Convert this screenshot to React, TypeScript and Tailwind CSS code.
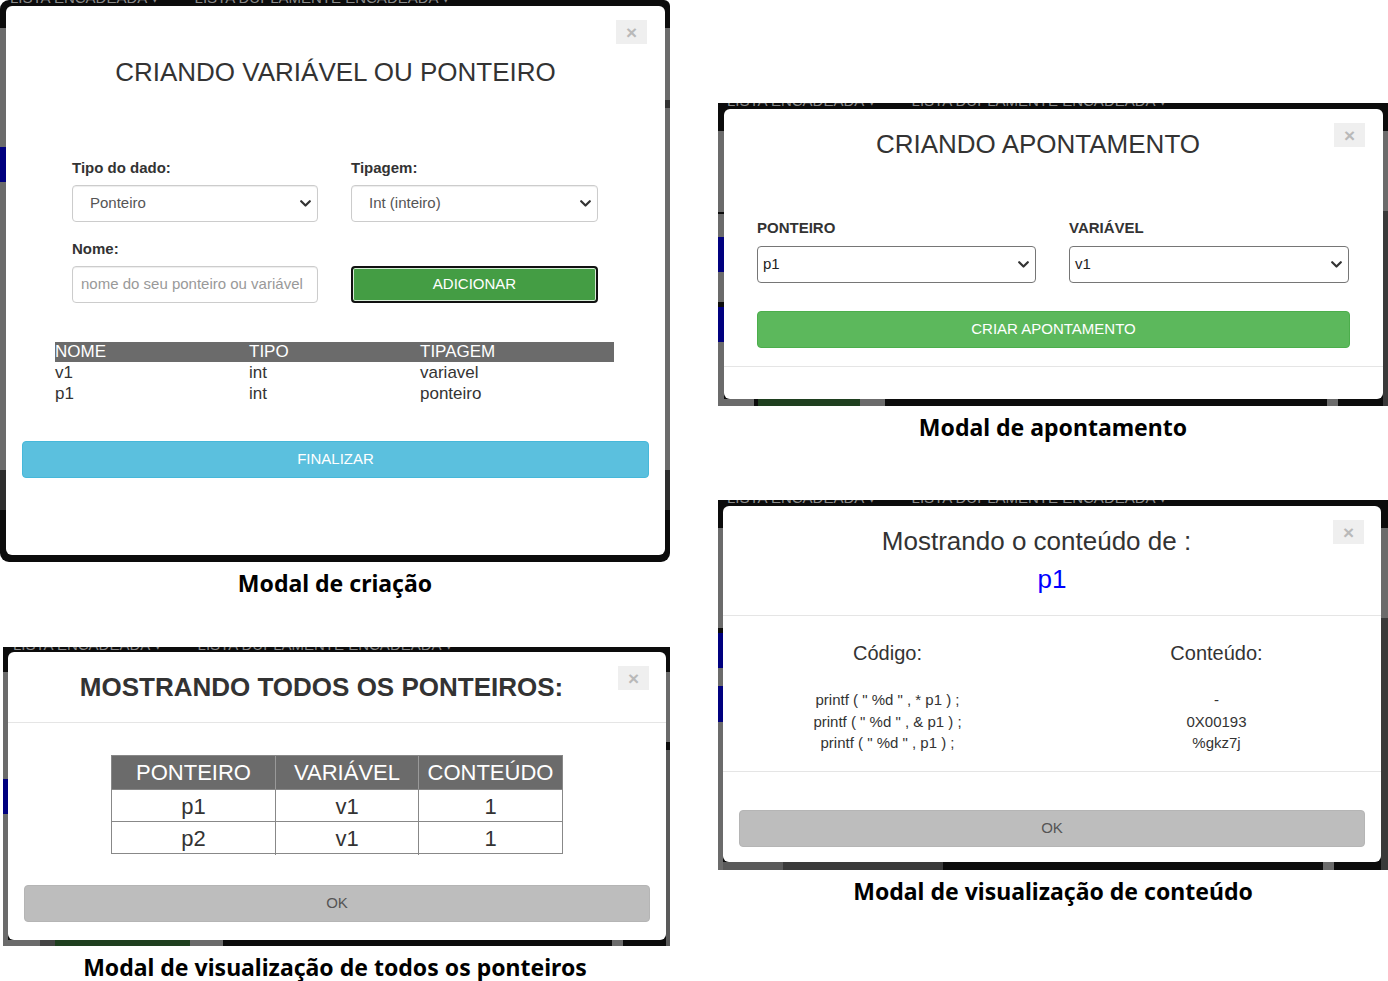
import React from "react";

/* ---------- small bits ---------- */
function Chevron() {
  return (
    <svg width="11" height="7" viewBox="0 0 11 7" className="shrink-0">
      <path d="M1.2 1.2 5.5 5.5 9.8 1.2" fill="none" stroke="#333" strokeWidth="2.2" strokeLinecap="round" strokeLinejoin="round" />
    </svg>
  );
}

function CloseBtn({ className = "" }: { className?: string }) {
  return (
    <div className={`absolute flex h-[24px] w-[31px] items-center justify-center bg-[#efefef] text-[19px] font-bold leading-none text-[#b9b9b9] ${className}`}>
      ×
    </div>
  );
}

function Caption({ children }: { children: React.ReactNode }) {
  return (
    <div className="flex h-[42px] items-center justify-center font-['Noto_Sans',sans-serif] text-[23px] font-bold text-black">
      {children}
    </div>
  );
}

/* ---------- dimmed app behind the modal ---------- */
function Strip({ blocks, className = "" }: { blocks: string[]; className?: string }) {
  return (
    <div className={`flex shrink-0 ${className}`}>
      {blocks.map((b, i) => (
        <div key={i} className={`shrink-0 ${b}`} />
      ))}
      <div className="flex-1" />
    </div>
  );
}

function Backdrop({
  children, left, right, bottom, className = "", navClass = "pl-[4px]", leftW, rightW, topH = "h-[6px]",
}: {
  children: React.ReactNode; left: string[]; right: string[]; bottom: string[]; className?: string;
  navClass?: string; leftW: string; rightW: string; topH?: string;
}) {
  return (
    <div className={`flex overflow-hidden bg-[#0c0c0c] ${className}`}>
      <Strip blocks={left} className={`flex-col ${leftW}`} />
      <div className="flex min-w-0 flex-1 flex-col">
        <div className={`overflow-hidden ${topH}`}>
          <div className={`-mt-[10px] flex gap-[36px] whitespace-nowrap text-[15px] leading-[16px] text-[#8a8a8a] ${navClass}`}>
            <span>LISTA ENCADEADA ▾</span>
            <span>LISTA DUPLAMENTE ENCADEADA ▾</span>
          </div>
        </div>
        <div className="relative">{children}</div>
        <Strip blocks={bottom} className="flex-1 flex-row" />
      </div>
      <Strip blocks={right} className={`flex-col ${rightW}`} />
    </div>
  );
}

/* ---------- Modal 1 : criação ---------- */
function Label({ children, className = "" }: { children: React.ReactNode; className?: string }) {
  return <div className={`text-[15px] font-bold leading-[20px] text-[#333] ${className}`}>{children}</div>;
}

function BsSelect({ value }: { value: string }) {
  return (
    <div className="mt-[7px] flex h-[37px] items-center justify-between rounded-[4px] border border-[#ccc] bg-white pl-[17px] pr-[6px] text-[15px] text-[#555] shadow-[inset_0_1px_1px_rgba(0,0,0,0.075)]">
      <span>{value}</span>
      <Chevron />
    </div>
  );
}

function ModalCriacao() {
  return (
    <div className="relative h-[549px] rounded-[6px] bg-white">
      <CloseBtn className="right-[18px] top-[14px]" />
      <h2 className="pt-[51px] text-center text-[26px] leading-[30px] text-[#333]">CRIANDO VARIÁVEL OU PONTEIRO</h2>
      <div className="mt-[71px] grid grid-cols-[246px_247px] gap-x-[33px] pl-[66px]">
        <div>
          <Label>Tipo do dado:</Label>
          <BsSelect value="Ponteiro" />
          <Label className="mt-[17px]">Nome:</Label>
          <div className="mt-[7px] flex h-[37px] items-center rounded-[4px] border border-[#ccc] pl-[8px] text-[15px] text-[#999] shadow-[inset_0_1px_1px_rgba(0,0,0,0.075)]">
            nome do seu ponteiro ou variável
          </div>
        </div>
        <div>
          <Label>Tipagem:</Label>
          <BsSelect value="Int (inteiro)" />
          <div className="mt-[44px] flex h-[37px] items-center justify-center rounded-[4px] border-2 border-[#111] bg-[#449d44] text-[15px] text-white shadow-[inset_0_0_0_1px_#d7ecd7]">
            ADICIONAR
          </div>
        </div>
      </div>
      <div className="ml-[49px] mt-[39px] w-[559px] text-[17px]">
        <div className="grid h-[20px] grid-cols-[194px_171px_1fr] items-center bg-[#6b6b6b] leading-[20px] text-white">
          <span>NOME</span>
          <span>TIPO</span>
          <span>TIPAGEM</span>
        </div>
        {[
          ["v1", "int", "variavel"],
          ["p1", "int", "ponteiro"],
        ].map((r) => (
          <div key={r[0]} className="grid h-[21px] grid-cols-[194px_171px_1fr] items-center leading-[21px] text-[#333]">
            <span>{r[0]}</span>
            <span>{r[1]}</span>
            <span>{r[2]}</span>
          </div>
        ))}
      </div>
      <div className="mx-[16px] mt-[37px] flex h-[37px] items-center justify-center rounded-[4px] border border-[#46b8da] bg-[#5bc0de] text-[15px] text-white">
        FINALIZAR
      </div>
    </div>
  );
}

/* ---------- Modal 2 : apontamento ---------- */
function NativeSelect({ value }: { value: string }) {
  return (
    <div className="mt-[8px] flex h-[37px] items-center justify-between rounded-[4px] border border-[#767676] bg-white pl-[5px] pr-[6px] text-[15px] text-[#222]">
      <span>{value}</span>
      <Chevron />
    </div>
  );
}

function ModalApontamento() {
  return (
    <div className="relative h-[290px] rounded-[6px] bg-white">
      <CloseBtn className="right-[18px] top-[14px]" />
      <h2 className="pr-[31px] pt-[20px] text-center text-[26px] leading-[30px] text-[#333]">CRIANDO APONTAMENTO</h2>
      <div className="mt-[59px] grid grid-cols-[279px_280px] gap-x-[33px] pl-[33px]">
        <div>
          <Label>PONTEIRO</Label>
          <NativeSelect value="p1" />
        </div>
        <div>
          <Label>VARIÁVEL</Label>
          <NativeSelect value="v1" />
        </div>
      </div>
      <div className="mx-[33px] mt-[28px] flex h-[37px] items-center justify-center rounded-[4px] border border-[#4cae4c] bg-[#5cb85c] text-[15px] text-white">
        CRIAR APONTAMENTO
      </div>
      <div className="mt-[18px] border-t border-[#e5e5e5]" />
    </div>
  );
}

/* ---------- Modal 3 : todos os ponteiros ---------- */
function ModalTodos() {
  const rows = [
    ["p1", "v1", "1"],
    ["p2", "v1", "1"],
  ];
  return (
    <div className="relative h-[288px] rounded-[6px] bg-white">
      <CloseBtn className="right-[17px] top-[14px]" />
      <div className="flex h-[71px] items-center justify-center border-b border-[#e5e5e5] pr-[31px]">
        <h2 className="text-[26px] font-bold leading-[30px] text-[#333]">MOSTRANDO TODOS OS PONTEIROS:</h2>
      </div>
      <div className="ml-[103px] mt-[32px] w-[452px] border border-[#888] text-[22px]">
        <div className="grid h-[33px] grid-cols-[164px_143px_1fr] bg-[#6b6b6b] text-white">
          <span className="flex items-center justify-center border-r border-[#999]">PONTEIRO</span>
          <span className="flex items-center justify-center border-r border-[#999]">VARIÁVEL</span>
          <span className="flex items-center justify-center">CONTEÚDO</span>
        </div>
        {rows.map((r, i) => (
          <div key={i} className="grid h-[32px] grid-cols-[164px_143px_1fr] border-t border-[#888] text-[#333]">
            <span className="flex items-center justify-center border-r border-[#888]">{r[0]}</span>
            <span className="flex items-center justify-center border-r border-[#888]">{r[1]}</span>
            <span className="flex items-center justify-center">{r[2]}</span>
          </div>
        ))}
      </div>
      <div className="mx-[16px] mt-[31px] flex h-[37px] items-center justify-center rounded-[4px] border border-[#b5b5b5] bg-[#bdbdbd] text-[15px] text-[#555]">
        OK
      </div>
    </div>
  );
}

/* ---------- Modal 4 : conteúdo ---------- */
function ModalConteudo() {
  return (
    <div className="relative h-[356px] rounded-[6px] bg-white">
      <CloseBtn className="right-[17px] top-[14px]" />
      <div className="border-b border-[#e5e5e5] pb-[17px] pt-[16px] text-[26px] leading-[38px]">
        <div className="pr-[31px] text-center text-[#333]">Mostrando o conteúdo de :</div>
        <div className="text-center text-[#0000ff]">p1</div>
      </div>
      <div className="grid grid-cols-2 border-b border-[#e5e5e5] pb-[17px] pt-[25px] text-center text-[#333]">
        <div>
          <div className="text-[20px] leading-[24px]">Código:</div>
          <div className="mt-[24px] text-[15px] leading-[21.5px]">
            <div>printf ( " %d " , * p1 ) ;</div>
            <div>printf ( " %d " , &amp; p1 ) ;</div>
            <div>printf ( " %d " , p1 ) ;</div>
          </div>
        </div>
        <div>
          <div className="text-[20px] leading-[24px]">Conteúdo:</div>
          <div className="mt-[24px] text-[15px] leading-[21.5px]">
            <div>-</div>
            <div>0X00193</div>
            <div>%gkz7j</div>
          </div>
        </div>
      </div>
      <div className="mx-[16px] mt-[38px] flex h-[37px] items-center justify-center rounded-[4px] border border-[#b5b5b5] bg-[#bdbdbd] text-[15px] text-[#555]">
        OK
      </div>
    </div>
  );
}

/* ---------- App ---------- */
export default function App() {
  return (
    <div className="flex h-[981px] w-[1388px] gap-[48px] overflow-hidden bg-white font-['Liberation_Sans',Arial,sans-serif]">
      {/* left column */}
      <div className="w-[670px]">
        <Backdrop
          className="h-[562px] rounded-b-[9px] rounded-tl-[9px] rounded-tr-[6px]"
          leftW="w-[6px]"
          rightW="w-[5px]"
          left={["h-[28px]", "h-[119px] bg-[#6b6b6b]", "h-[35px] bg-[#00007f]", "h-[288px] bg-[#6b6b6b]", "h-[40px] bg-[#2e2e2e]"]}
          right={["h-[28px]", "h-[72px] bg-[#6b6b6b]", "h-[8px] bg-[#333]", "h-[362px] bg-[#6b6b6b]", "h-[40px] bg-[#2e2e2e]"]}
          bottom={[]}
        >
          <ModalCriacao />
        </Backdrop>
        <Caption>Modal de criação</Caption>

        <Backdrop
          className="ml-[3px] mt-[43px] h-[299px]"
          topH="h-[5px]"
          leftW="w-[5px]"
          rightW="w-[4px]"
          navClass="pl-[5px]"
          left={["h-[25px]", "h-[107px] bg-[#6b6b6b]", "h-[35px] bg-[#00007f]", "h-[132px] bg-[#6b6b6b]"]}
          right={["h-[25px]", "h-[70px] bg-[#6b6b6b]", "h-[8px]", "h-[196px] bg-[#5a5a5a]"]}
          bottom={["w-[32px] bg-[#6b6b6b]", "w-[15px] bg-[#444]", "w-[135px] bg-[#1f3f1f]", "w-[33px] bg-[#6b6b6b]", "w-[389px]", "w-[11px] bg-[#6b6b6b]"]}
        >
          <ModalTodos />
        </Backdrop>
        <Caption>Modal de visualização de todos os ponteiros</Caption>
      </div>

      {/* right column */}
      <div className="w-[670px] pt-[103px]">
        <Backdrop
          className="h-[303px]"
          leftW="w-[6px]"
          rightW="w-[5px]"
          navClass="pl-[3px]"
          left={["h-[28px]", "h-[81px] bg-[#6b6b6b]", "h-[2px]", "h-[23px] bg-[#6b6b6b]", "h-[35px] bg-[#00007f]", "h-[30px] bg-[#6b6b6b]", "h-[5px]", "h-[35px] bg-[#00007f]", "h-[64px] bg-[#6b6b6b]"]}
          right={["h-[28px]", "h-[80px] bg-[#6b6b6b]", "h-[195px] bg-[#3a3a3a]"]}
          bottom={["w-[30px] bg-[#6b6b6b]", "w-[4px]", "w-[102px] bg-[#1f3f1f]", "w-[25px] bg-[#6b6b6b]", "w-[442px]", "w-[11px] bg-[#6b6b6b]"]}
        >
          <ModalApontamento />
        </Backdrop>
        <Caption>Modal de apontamento</Caption>

        <Backdrop
          className="mt-[52px] h-[370px]"
          leftW="w-[5px]"
          rightW="w-[7px]"
          navClass="pl-[4px]"
          left={["h-[28px]", "h-[100px] bg-[#6b6b6b]", "h-[5px]", "h-[35px] bg-[#00007f]", "h-[18px] bg-[#6b6b6b]", "h-[36px] bg-[#00007f]", "h-[148px] bg-[#6b6b6b]"]}
          right={["h-[28px]", "h-[90px] bg-[#6b6b6b]", "h-[252px] bg-[#3a3a3a]"]}
          bottom={["w-[60px] bg-[#5a5a5a]", "w-[160px] bg-[#3a3a3a]", "w-[380px]", "w-[11px] bg-[#6b6b6b]"]}
        >
          <ModalConteudo />
        </Backdrop>
        <Caption>Modal de visualização de conteúdo</Caption>
      </div>
    </div>
  );
}
